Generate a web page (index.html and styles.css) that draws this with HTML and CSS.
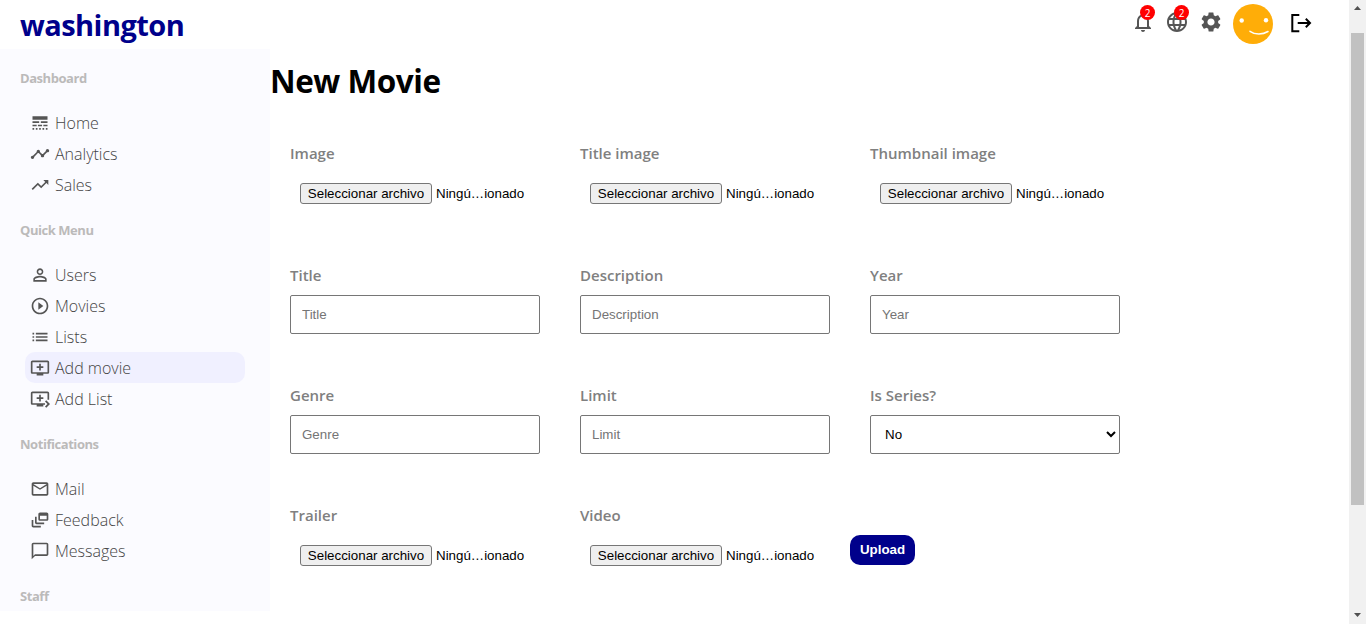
FILE: index.html
```html
<!DOCTYPE html>
<html lang="en">
<head>
<meta charset="utf-8">
<title>New Movie</title>
<link rel="stylesheet" href="styles.css">
</head>
<body>
<div class="page">
  <div class="app">
    <header class="topbar">
      <span class="logo">washington</span>
      <div class="tools">
        <div class="tool"><svg class="tool-icon" viewBox="0 0 24 24"><path d="M12 22c1.1 0 2-.9 2-2h-4c0 1.1.9 2 2 2zm6-6v-5c0-3.07-1.63-5.64-4.5-6.32V4c0-.83-.67-1.5-1.5-1.5s-1.5.67-1.5 1.5v.68C7.64 5.36 6 7.92 6 11v5l-2 2v1h16v-1l-2-2zm-2 1H8v-6c0-2.48 1.51-4.5 4-4.5s4 2.02 4 4.5v6z"/></svg><span class="badge">2</span></div>
        <div class="tool"><svg class="tool-icon" viewBox="0 0 24 24"><path d="M11.99 2C6.47 2 2 6.48 2 12s4.47 10 9.99 10C17.52 22 22 17.52 22 12S17.52 2 11.99 2zm6.93 6h-2.95c-.32-1.25-.78-2.45-1.38-3.56 1.84.63 3.37 1.91 4.33 3.56zM12 4.04c.83 1.2 1.48 2.53 1.91 3.96h-3.82c.43-1.43 1.08-2.76 1.91-3.96zM4.26 14C4.1 13.36 4 12.69 4 12s.1-1.36.26-2h3.38c-.08.66-.14 1.32-.14 2 0 .68.06 1.34.14 2H4.26zm.82 2h2.95c.32 1.25.78 2.45 1.38 3.56-1.84-.63-3.37-1.9-4.33-3.56zm2.95-8H5.08c.96-1.66 2.49-2.93 4.33-3.56C8.81 5.55 8.35 6.75 8.03 8zM12 19.96c-.83-1.2-1.48-2.53-1.91-3.96h3.82c-.43 1.43-1.08 2.76-1.91 3.96zM14.34 14H9.66c-.09-.66-.16-1.32-.16-2 0-.68.07-1.35.16-2h4.68c.09.65.16 1.32.16 2 0 .68-.07 1.34-.16 2zm.25 5.56c.6-1.11 1.06-2.31 1.38-3.56h2.95c-.96 1.65-2.49 2.93-4.33 3.56zM16.36 14c.08-.66.14-1.32.14-2 0-.68-.06-1.34-.14-2h3.38c.16.64.26 1.31.26 2s-.1 1.36-.26 2h-3.38z"/></svg><span class="badge">2</span></div>
        <div class="tool"><svg class="tool-icon" viewBox="0 0 24 24"><path d="M19.14 12.94c.04-.3.06-.61.06-.94 0-.32-.02-.64-.07-.94l2.03-1.58c.18-.14.23-.41.12-.61l-1.92-3.32c-.12-.22-.37-.29-.59-.22l-2.39.96c-.5-.38-1.03-.7-1.62-.94l-.36-2.54c-.04-.24-.24-.41-.48-.41h-3.84c-.24 0-.43.17-.47.41l-.36 2.54c-.59.24-1.13.57-1.62.94l-2.39-.96c-.22-.08-.47 0-.59.22L2.74 8.87c-.12.21-.08.47.12.61l2.03 1.58c-.05.3-.09.63-.09.94s.02.64.07.94l-2.03 1.58c-.18.14-.23.41-.12.61l1.92 3.32c.12.22.37.29.59.22l2.39-.96c.5.38 1.03.7 1.62.94l.36 2.54c.05.24.24.41.48.41h3.84c.24 0 .44-.17.47-.41l.36-2.54c.59-.24 1.13-.56 1.62-.94l2.39.96c.22.08.47 0 .59-.22l1.92-3.32c.12-.22.07-.47-.12-.61l-2.01-1.58zM12 15.6c-1.98 0-3.6-1.62-3.6-3.6s1.62-3.6 3.6-3.6 3.6 1.62 3.6 3.6-1.62 3.6-3.6 3.6z"/></svg></div>
        <svg class="avatar" viewBox="0 0 40 40"><circle cx="20" cy="20" r="20" fill="#ffad08"/><circle cx="8.7" cy="16.5" r="2.2" fill="#fff"/><circle cx="33" cy="16.2" r="2.2" fill="#fff"/><path d="M17 27.3c5 3.6 12.5 3.5 18 .2" fill="none" stroke="#fff" stroke-width="1.5" stroke-linecap="round"/></svg>
        <svg class="logout" viewBox="0 0 24 24"><path d="M11.3 4H4.3v16.2h7M9.7 12h12.6M17.8 7.8 22 12l-4.200 4.200"/></svg>
      </div>
    </header>
    <div class="body">
      <nav class="sidebar">
        <h3 class="group">Dashboard</h3>
        <ul class="menu">
          <li class="item"><svg class="icon" viewBox="0 0 24 24"><path d="M3 16h5v-2H3v2zm6.500 0h5v-2h-5v2zm6.500 0h5v-2h-5v2zM3 20h2v-2H3v2zm4 0h2v-2H7v2zm4 0h2v-2h-2v2zm4 0h2v-2h-2v2zm4 0h2v-2h-2v2zM3 12h8v-2H3v2zm10 0h8v-2h-8v2zM3 4v4h18V4H3z"/></svg><span>Home</span></li>
          <li class="item"><svg class="icon" viewBox="0 0 24 24"><path d="M23 8c0 1.1-.9 2-2 2-.18 0-.35-.02-.51-.07l-3.56 3.55c.05.16.07.34.07.52 0 1.1-.9 2-2 2s-2-.9-2-2c0-.18.02-.36.07-.52l-2.55-2.55c-.16.05-.34.07-.52.07s-.36-.02-.52-.07l-4.55 4.56c.05.16.07.33.07.51 0 1.1-.9 2-2 2s-2-.9-2-2 .9-2 2-2c.18 0 .35.02.51.07l4.56-4.55C8.02 9.36 8 9.18 8 9c0-1.1.9-2 2-2s2 .9 2 2c0 .18-.02.36-.07.52l2.55 2.55c.16-.05.34-.07.52-.07s.36.02.52.07l3.55-3.56C19.02 8.35 19 8.18 19 8c0-1.100.9-2 2-2s2 .9 2 2z"/></svg><span>Analytics</span></li>
          <li class="item"><svg class="icon" viewBox="0 0 24 24"><path d="M16 6l2.290 2.290-4.880 4.880-4-4L2 16.590 3.410 18l6-6 4 4 6.300-6.290L22 12V6z"/></svg><span>Sales</span></li>
        </ul>
        <h3 class="group">Quick Menu</h3>
        <ul class="menu">
          <li class="item"><svg class="icon" viewBox="0 0 24 24"><path d="M12 5.900c1.160 0 2.100.940 2.100 2.100s-.940 2.100-2.100 2.100S9.900 9.160 9.900 8s.940-2.100 2.100-2.100m0 9c2.970 0 6.100 1.460 6.100 2.100v1.100H5.900V17c0-.640 3.130-2.100 6.100-2.100M12 4C9.790 4 8 5.790 8 8s1.790 4 4 4 4-1.790 4-4-1.790-4-4-4zm0 9c-2.670 0-8 1.340-8 4v3h16v-3c0-2.660-5.330-4-8-4z"/></svg><span>Users</span></li>
          <li class="item"><svg class="icon" viewBox="0 0 24 24"><path d="M10 16.500l6-4.500-6-4.500v9zM12 2C6.480 2 2 6.480 2 12s4.480 10 10 10 10-4.480 10-10S17.520 2 12 2zm0 18c-4.410 0-8-3.590-8-8s3.590-8 8-8 8 3.590 8 8-3.590 8-8 8z"/></svg><span>Movies</span></li>
          <li class="item"><svg class="icon" viewBox="0 0 24 24"><path d="M3 13h2v-2H3v2zm0 4h2v-2H3v2zm0-8h2V7H3v2zm4 4h14v-2H7v2zm0 4h14v-2H7v2zM7 7v2h14V7H7z"/></svg><span>Lists</span></li>
          <li class="item active"><svg class="icon" viewBox="0 0 24 24"><path d="M21 3H3c-1.110 0-2 .890-2 2v12c0 1.100.890 2 2 2h5v2h8v-2h5c1.100 0 1.990-.900 1.990-2L23 5c0-1.110-.900-2-2-2zm0 14H3V5h18v12zm-5-7v2h-3v3h-2v-3H8v-2h3V7h2v3h3z"/></svg><span>Add movie</span></li>
          <li class="item"><svg class="icon" viewBox="0 0 24 24"><path d="M21 3H3c-1.110 0-2 .890-2 2v12c0 1.100.890 2 2 2h5v2h8v-2h2v-2H3V5h18v8h2V5c0-1.110-.900-2-2-2zm-8 7V7h-2v3H8v2h3v3h2v-3h3v-2h-3zm11 8l-4.500 4.500L18 21l3-3-3-3 1.500-1.500L24 18z"/></svg><span>Add List</span></li>
        </ul>
        <h3 class="group">Notifications</h3>
        <ul class="menu">
          <li class="item"><svg class="icon" viewBox="0 0 24 24"><path d="M20 4H4c-1.100 0-1.990.900-1.990 2L2 18c0 1.100.900 2 2 2h16c1.100 0 2-.900 2-2V6c0-1.100-.900-2-2-2zm0 14H4V8l8 5 8-5v10zm-8-7L4 6h16l-8 5z"/></svg><span>Mail</span></li>
          <li class="item"><svg class="icon" viewBox="0 0 24 24"><path d="M8 8H6v7c0 1.100.900 2 2 2h9v-2H8V8zM20 3h-8c-1.100 0-2 .900-2 2v6c0 1.100.900 2 2 2h8c1.100 0 2-.900 2-2V5c0-1.100-.900-2-2-2zm0 8h-8V7h8v4zM4 12H2v7c0 1.100.900 2 2 2h9v-2H4v-7z"/></svg><span>Feedback</span></li>
          <li class="item"><svg class="icon" viewBox="0 0 24 24"><path d="M20 2H4c-1.100 0-2 .900-2 2v18l4-4h14c1.100 0 2-.900 2-2V4c0-1.100-.900-2-2-2zm0 14H6l-2 2V4h16v12z"/></svg><span>Messages</span></li>
        </ul>
        <h3 class="group">Staff</h3>
      </nav>
      <main class="content">
        <h1 class="title">New Movie</h1>
        <form class="form">
          <div class="field"><label class="label">Image</label><div class="file"><button type="button" class="pick">Seleccionar archivo</button><span>Ningú…ionado</span></div></div>
          <div class="field"><label class="label">Title image</label><div class="file"><button type="button" class="pick">Seleccionar archivo</button><span>Ningú…ionado</span></div></div>
          <div class="field"><label class="label">Thumbnail image</label><div class="file"><button type="button" class="pick">Seleccionar archivo</button><span>Ningú…ionado</span></div></div>
          <div class="field"><label class="label">Title</label><input class="input" type="text" placeholder="Title"></div>
          <div class="field"><label class="label">Description</label><input class="input" type="text" placeholder="Description"></div>
          <div class="field"><label class="label">Year</label><input class="input" type="text" placeholder="Year"></div>
          <div class="field"><label class="label">Genre</label><input class="input" type="text" placeholder="Genre"></div>
          <div class="field"><label class="label">Limit</label><input class="input" type="text" placeholder="Limit"></div>
          <div class="field"><label class="label">Is Series?</label><select class="input select"><option>No</option><option>Yes</option></select></div>
          <div class="field"><label class="label">Trailer</label><div class="file"><button type="button" class="pick">Seleccionar archivo</button><span>Ningú…ionado</span></div></div>
          <div class="field"><label class="label">Video</label><div class="file"><button type="button" class="pick">Seleccionar archivo</button><span>Ningú…ionado</span></div></div>
          <button type="button" class="upload">Upload</button>
        </form>
      </main>
    </div>
  </div>
  <div class="scrollbar">
    <svg class="arrow" viewBox="0 0 17 17"><path d="M5 10h7L8.500 6z"/></svg>
    <div class="thumb"></div>
    <svg class="arrow" viewBox="0 0 17 17"><path d="M5 6h7l-3.500 4z"/></svg>
  </div>
</div>
</body>
</html>
```
FILE: styles.css
```css
* { box-sizing: border-box; }
body { margin: 0; background: #fff; font-family: "Open Sans", "Noto Sans", sans-serif; overflow: hidden; }
.page { display: flex; height: 624px; }
.app { flex: 1; min-width: 0; }
.topbar { height: 49px; padding: 0 35px 0 20px; display: flex; justify-content: space-between; align-items: flex-start; }
.logo { font-size: 29px; line-height: 50px; font-weight: 700; color: #00008b; letter-spacing: -.55px; }
.tools { display: flex; align-items: center; height: 48px; }
.tool { position: relative; width: 24px; height: 24px; margin-right: 10px; margin-top: -4px; }
.tool-icon { display: block; width: 24px; height: 24px; fill: #555; }
.badge { position: absolute; top: -5px; right: 0; width: 15px; height: 15px; border-radius: 50%; background: #f00; color: #fff; font-size: 10px; line-height: 16px; text-align: center; }
.avatar { width: 40px; height: 40px; }
.logout { width: 24px; height: 24px; margin: -2px 2px 0 15px; fill: none; stroke: #000; stroke-width: 2; }
.body { display: flex; }
.sidebar { width: 270px; height: 562px; background: #fbfbff; overflow: hidden; }
.group { margin: 0; height: 58px; padding-left: 20px; font-size: 13px; line-height: 59px; font-weight: 700; color: #bbbaba; letter-spacing: -.45px; }
.menu { list-style: none; margin: 0 0 1px; padding: 0 25px; }
.item { height: 31px; padding: 5px; display: flex; align-items: center; gap: 5px; border-radius: 10px; font-size: 16px; font-weight: 300; color: #444; white-space: nowrap; }
.active { background: #f0f0ff; }
.icon { width: 20px; height: 20px; fill: #555; flex: none; }
.content { flex: 1; }
.title { margin: 0; height: 62px; font-size: 31.5px; line-height: 64px; font-weight: 700; color: #000; letter-spacing: -.45px; }
.form { display: grid; grid-template-columns: repeat(3, 250px); column-gap: 40px; row-gap: 51px; padding: 32px 20px; align-items: start; }
.field { display: flex; flex-direction: column; gap: 10px; }
.label { height: 20px; font-size: 15px; line-height: 20px; font-weight: 600; color: gray; }
.file { height: 41px; padding: 10px; display: flex; align-items: center; gap: 4px; font: 13.333px "Liberation Sans", Arial, sans-serif; color: #000; white-space: nowrap; }
.pick { width: 132px; height: 21px; padding: 0; border: 1px solid #767676; border-radius: 3px; background: #efefef; font: 13.333px "Liberation Sans", Arial, sans-serif; color: #000; }
.input { width: 250px; height: 39px; margin: 0; padding: 10px 11px; border: 1px solid #767676; border-radius: 2px; background-color: #fff; font: 13.333px "Liberation Sans", Arial, sans-serif; color: #000; }
.input::placeholder { color: #757575; opacity: 1; }
.select { padding: 10px; padding-right: 0; }
.upload { width: 65px; height: 30px; margin: 30px 0 0 -20px; padding: 0 0 2px; border: 0; border-radius: 10px; background: #00008b; color: #fff; font: bold 13.333px "Liberation Sans", Arial, sans-serif; }
.scrollbar { width: 17px; background: #f1f1f1; display: flex; flex-direction: column; align-items: center; }
.arrow { width: 17px; height: 17px; fill: #505050; flex: none; }
.thumb { width: 13px; height: 472px; margin-top: 16px; margin-bottom: auto; background: #c1c1c1; }
```
